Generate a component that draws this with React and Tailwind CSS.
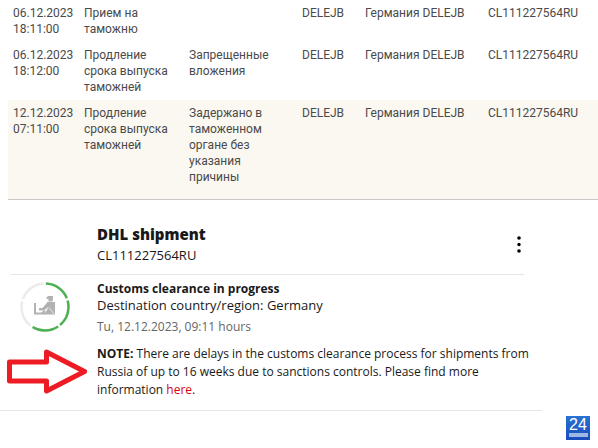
const events = [
  { date: '06.12.2023', time: '18:11:00', operation: 'Прием на таможню', reason: '' },
  { date: '06.12.2023', time: '18:12:00', operation: 'Продление срока выпуска таможней', reason: 'Запрещенные вложения' },
  { date: '12.12.2023', time: '07:11:00', operation: 'Продление срока выпуска таможней', reason: 'Задержано в таможенном органе без указания причины', highlight: true },
];

function ProgressRing() {
  return (
    <svg width="50" height="50" viewBox="0 0 50 50" fill="none" aria-hidden="true">
      <g transform="rotate(-88 25 25)" strokeWidth="2.5">
        <circle cx="25" cy="25" r="23.5" pathLength="360" stroke="#4caf50" strokeDasharray="66 6 66 6 66 150" />
        <circle cx="25" cy="25" r="23.5" pathLength="360" stroke="#ebebeb" strokeDasharray="66 6 66 222" strokeDashoffset="-216" />
      </g>
      {/* customs officer with suitcase */}
      <g fill="#b2b2b2">
        <path d="M26.5 15.5l1.5-1.5h5v2l-.5 3.5h-4v-2.5h-2z" />
        <path d="M14 21h2v9.5h5.5l2-2h2v4H14z" />
        <path d="M27.5 20H35v12.5H24.5l4-7.5-4.5 3.5h-5V26h3.5z" />
      </g>
      <path d="M29 25.5L34 32" stroke="#e6e6e6" strokeWidth="1" />
    </svg>
  );
}

function Arrow() {
  return (
    <svg width="80" height="46" viewBox="0 0 80 46" fill="none" aria-hidden="true">
      <path d="M2.5 13H39.5V3L77.5 22.5L39.5 42V32H2.5Z" stroke="#ed1c24" strokeWidth="5" strokeLinejoin="round" />
    </svg>
  );
}

function App() {
  return (
    <div className="bg-white font-['Open_Sans',sans-serif] text-xs text-[#191919]">
      <div className="pl-2">
        <table className="w-full table-fixed border-b border-[#c8c8c8] font-[Roboto,sans-serif] leading-4 text-[#4a4a4a]">
          <colgroup>
            <col className="w-[71px]" />
            <col className="w-[105px]" />
            <col className="w-[113px]" />
            <col className="w-[63px]" />
            <col className="w-[123px]" />
            <col />
          </colgroup>
          <tbody>
            {events.map((e) => (
              <tr key={e.date + e.time} className={e.highlight ? 'h-[99px] bg-[#fbf8f1] align-top' : 'align-top'}>
                <td className="p-[5px]">{e.date}<br />{e.time}</td>
                <td className="p-[5px]">{e.operation}</td>
                <td className="py-[5px] pl-[5px] pr-5">{e.reason}</td>
                <td className="p-[5px]">DELEJB</td>
                <td className="p-[5px]">Германия DELEJB</td>
                <td className="p-[5px]">CL111227564RU</td>
              </tr>
            ))}
          </tbody>
        </table>
      </div>

      <section className="mr-14 border-b border-[#e5e5e5] pb-[11px] pt-6">
        <header className="ml-[11px] mr-[18px] flex items-center justify-between border-b border-[#e5e5e5] pb-2 pl-[86px]">
          <div>
            <h2 className="text-[15px] font-extrabold leading-5">DHL shipment</h2>
            <p className="text-[13px] leading-[22px]">CL111227564RU</p>
          </div>
          <button type="button" aria-label="More options" className="flex w-[10px] items-center justify-center">
            <svg width="4" height="18" viewBox="0 0 4 18" aria-hidden="true">
              <circle cx="2" cy="2" r="1.8" />
              <circle cx="2" cy="8.5" r="1.7" />
              <circle cx="2" cy="15" r="1.8" />
            </svg>
          </button>
        </header>

        <div className="flex pt-1">
          <div className="w-[97px] shrink-0 pl-5 pt-[3px]">
            <ProgressRing />
          </div>
          <div className="pt-[2px]">
            <h3 className="font-bold leading-4">Customs clearance in progress</h3>
            <p className="text-[13px] leading-4">Destination country/region: Germany</p>
            <p className="pt-1 leading-5 text-[#666]">Tu, 12.12.2023, 09:11 hours</p>
          </div>
        </div>

        <div className="flex items-center pt-2">
          <div className="w-[97px] shrink-0 pl-[7px]">
            <Arrow />
          </div>
          <p className="pr-2 leading-[18px]">
            <b>NOTE:</b> There are delays in the customs clearance process for shipments from Russia of up to 16 weeks due to sanctions controls. Please find more information <a href="#" className="text-[#d40511]">here</a>.
          </p>
        </div>
      </section>

      <div className="flex justify-end pb-2 pr-2 pt-[5px]">
        <div className="flex h-6 w-6 flex-col items-center bg-linear-to-b from-[#2a72d4] to-[#1a4cb8] text-white">
          <span className="font-['Liberation_Sans',sans-serif] text-base leading-[17px]">24</span>
          <span className="h-1 w-[19px] bg-[#9db8e6]" />
        </div>
      </div>
    </div>
  );
}

export default App;
